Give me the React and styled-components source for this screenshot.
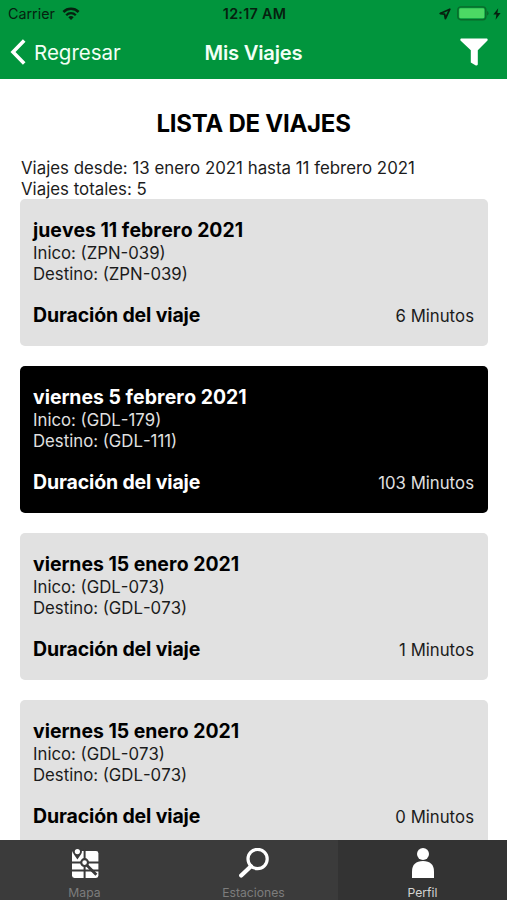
import styled, { createGlobalStyle } from "styled-components";

const trips = [
  {
    date: "jueves 11 febrero 2021",
    start: "(ZPN-039)",
    end: "(ZPN-039)",
    minutes: 6,
  },
  {
    date: "viernes 5 febrero 2021",
    start: "(GDL-179)",
    end: "(GDL-111)",
    minutes: 103,
    dark: true,
  },
  {
    date: "viernes 15 enero 2021",
    start: "(GDL-073)",
    end: "(GDL-073)",
    minutes: 1,
  },
  {
    date: "viernes 15 enero 2021",
    start: "(GDL-073)",
    end: "(GDL-073)",
    minutes: 0,
  },
];

function WifiIcon() {
  return (
    <svg width="18" height="14" viewBox="0 0 18 14" fill="none" stroke="#06210f">
      <path d="M1.4 5 A10.8 10.8 0 0 1 16.6 5" strokeWidth="2.5" />
      <path d="M4.2 8.2 A6.8 6.8 0 0 1 13.8 8.2" strokeWidth="2.3" />
      <path d="M9 13 L6.3 10.3 A3.9 3.9 0 0 1 11.7 10.3 Z" fill="#06210f" stroke="none" />
    </svg>
  );
}

function LocationIcon() {
  return (
    <svg width="12" height="12" viewBox="0 0 12 12">
      <path
        d="M10.8 1.2 L1.2 5.5 L5.6 6.1 L6.4 10.6 Z"
        fill="none"
        stroke="#06210f"
        strokeWidth="1.8"
        strokeLinejoin="round"
      />
    </svg>
  );
}

function BatteryIcon() {
  return (
    <svg width="32" height="15" viewBox="0 0 32 15">
      <rect x="0.8" y="0.9" width="28" height="12.8" rx="3" fill="none" stroke="#0a6a2b" strokeWidth="1.4" />
      <rect x="2.2" y="2.3" width="25.2" height="10" rx="1.4" fill="#4cd964" />
      <path d="M30 5 Q31.6 5.6 31.6 7.3 Q31.6 9 30 9.6 Z" fill="#0a6a2b" />
    </svg>
  );
}

function BoltIcon() {
  return (
    <svg width="8" height="12" viewBox="0 0 8 12">
      <path d="M5.2 0.3 L0.3 6.6 H3.4 L2.6 11.7 L7.6 5 H4.4 Z" fill="#06210f" />
    </svg>
  );
}

function BackIcon() {
  return (
    <svg width="16" height="26" viewBox="0 0 16 26">
      <path d="M14.2 1.4 L3 13 L14.2 24.6" fill="none" stroke="#fff" strokeWidth="3.6" />
    </svg>
  );
}

function FilterIcon() {
  return (
    <svg width="28" height="28" viewBox="0 0 28 28">
      <path
        d="M1 0.5 H27 Q28.4 1.6 27 3 L17.8 12.2 V26.6 Q17 28 15.4 27.2 L10.8 24.4 V12.2 L1 3 Q-0.4 1.6 1 0.5 Z"
        fill="#fff"
      />
    </svg>
  );
}

function MapIcon() {
  return (
    <svg width="28" height="30" viewBox="0 0 28 30">
      <rect x="1" y="3" width="26.4" height="27" rx="2.4" fill="#fff" />
      <g fill="none" stroke="#3b3b3b" strokeWidth="2">
        <path d="M13.6 1 V30" />
        <path d="M0 14.4 H28 M0 22.6 H28" />
        <path d="M13.6 15 L25.4 26.8" strokeWidth="2.8" />
      </g>
      <circle cx="13.6" cy="14.6" r="3.4" fill="#fff" stroke="#3b3b3b" strokeWidth="2.2" />
      <path d="M6.4 11.4 L2.6 6 A4.4 4.4 0 1 1 10.2 6 Z" fill="#3b3b3b" />
      <circle cx="6.4" cy="3.6" r="2.6" fill="#fff" />
    </svg>
  );
}

function SearchIcon() {
  return (
    <svg width="30" height="30" viewBox="0 0 30 30" fill="none" stroke="#fff">
      <circle cx="18.6" cy="11" r="9.6" strokeWidth="3.2" />
      <path d="M12 18.2 L2.2 27.6" strokeWidth="4.2" strokeLinecap="round" />
    </svg>
  );
}

function ProfileIcon() {
  return (
    <svg width="22" height="30" viewBox="0 0 22 30" fill="#fff">
      <circle cx="11" cy="6" r="6" />
      <path d="M0 30 V23.5 C0 16.5 4 13 11 13 C18 13 22 16.5 22 23.5 V30 Z" />
    </svg>
  );
}

function TripCard({ trip }) {
  return (
    <StyledTripCard $dark={trip.dark}>
      <TripTitle>{trip.date}</TripTitle>
      <TripText>Inico: {trip.start}</TripText>
      <TripText>Destino: {trip.end}</TripText>
      <TripDuration>
        <DurationLabel>Duración del viaje</DurationLabel>
        <TripText>{trip.minutes} Minutos</TripText>
      </TripDuration>
    </StyledTripCard>
  );
}

export default function App() {
  return (
    <Screen>
      <GlobalStyle />
      <Header>
        <StatusBar>
          <StatusLeft>
            <span>Carrier</span>
            <WifiIcon />
          </StatusLeft>
          <Clock>12:17 AM</Clock>
          <StatusRight>
            <LocationIcon />
            <BatteryIcon />
            <BoltIcon />
          </StatusRight>
        </StatusBar>
        <NavBar>
          <BackButton>
            <BackIcon />
            <span>Regresar</span>
          </BackButton>
          <NavTitle>Mis Viajes</NavTitle>
          <FilterButton>
            <FilterIcon />
          </FilterButton>
        </NavBar>
      </Header>

      <Content>
        <ListTitle>LISTA DE VIAJES</ListTitle>
        <Summary>Viajes desde: 13 enero 2021 hasta 11 febrero 2021</Summary>
        <Summary>Viajes totales: 5</Summary>
        <TripList>
          {trips.map((trip, i) => (
            <TripCard trip={trip} key={`${trip.date}-${i}`} />
          ))}
        </TripList>
      </Content>

      <TabBar>
        <Tab>
          <MapIcon />
          <TabLabel>Mapa</TabLabel>
        </Tab>
        <Tab>
          <SearchIcon />
          <TabLabel>Estaciones</TabLabel>
        </Tab>
        <Tab $active>
          <ProfileIcon />
          <TabLabel $active>Perfil</TabLabel>
        </Tab>
      </TabBar>
    </Screen>
  );
}

const GlobalStyle = createGlobalStyle`
  * {
    box-sizing: border-box;
  }

  body {
    margin: 0;
    background-color: #fff;
    font-family: Inter, "Liberation Sans", sans-serif;
  }

  svg {
    display: block;
    flex-shrink: 0;
  }
`;

const Screen = styled.div`
  display: flex;
  flex-direction: column;
  width: 507px;
  height: 900px;
  overflow: hidden;
`;

const Header = styled.header`
  flex: 0 0 79px;
  background-color: #01953d;
`;

const StatusBar = styled.div`
  display: grid;
  grid-template-columns: 1fr auto 1fr;
  align-items: center;
  height: 27px;
  padding: 0 6px 0 8px;
  color: #06210f;
  font-size: 14.3px;
`;

const StatusLeft = styled.div`
  display: flex;
  align-items: center;
  gap: 7px;
`;

const Clock = styled.div`
  font-size: 14.3px;
  font-weight: 600;
  letter-spacing: 0.3px;
`;

const StatusRight = styled.div`
  display: flex;
  align-items: center;
  justify-content: flex-end;
  gap: 4px;

  svg:first-child {
    margin-right: 2px;
  }
`;

const NavBar = styled.div`
  display: grid;
  grid-template-columns: 1fr auto 1fr;
  align-items: center;
  height: 50px;
  padding: 0 19px;
  color: #f2fff6;
`;

const BackButton = styled.div`
  display: flex;
  align-items: center;
  gap: 8px;
  margin-left: -9px;
  font-size: 20.5px;
`;

const NavTitle = styled.div`
  font-size: 20.2px;
  font-weight: 600;
  letter-spacing: -0.2px;
`;

const FilterButton = styled.div`
  display: flex;
  justify-content: flex-end;
`;

const Content = styled.main`
  flex: 1;
  min-height: 0;
  overflow: hidden;
  padding: 0 19px 0 20px;
`;

const ListTitle = styled.h1`
  margin: 29px 1px 19px 0;
  color: #000;
  font-size: 24px;
  font-weight: 700;
  letter-spacing: -0.25px;
  line-height: 31px;
  text-align: center;
`;

const Summary = styled.p`
  margin: 0 0 0 1px;
  color: #1c1c1c;
  font-size: 16.85px;
  line-height: 21px;
`;

const TripList = styled.div`
  display: grid;
  gap: 20px;
  margin-top: -1px;
`;

const StyledTripCard = styled.article`
  height: 147px;
  padding: 20px 14px 0 13px;
  border-radius: 5px;
  color: ${({ $dark }) => ($dark ? "#fff" : "#000")};
  background-color: ${({ $dark }) => ($dark ? "#000" : "#e1e1e1")};
`;

const TripTitle = styled.h2`
  margin: 0 0 1px;
  font-size: 19.4px;
  font-weight: 700;
  font-kerning: none;
  line-height: 23px;
`;

const TripText = styled.p`
  margin: 0;
  font-size: 16.75px;
  font-kerning: none;
  line-height: 21px;
  opacity: 0.88;
`;

const TripDuration = styled.div`
  display: flex;
  align-items: baseline;
  justify-content: space-between;
  margin-top: 19px;
`;

const DurationLabel = styled.h3`
  margin: 0;
  font-size: 19.5px;
  font-weight: 700;
  letter-spacing: -0.14px;
  line-height: 23px;
`;

const TabBar = styled.nav`
  display: grid;
  grid-template-columns: repeat(3, 1fr);
  flex: 0 0 60px;
`;

const Tab = styled.div`
  display: flex;
  flex-direction: column;
  align-items: center;
  padding-top: 8px;
  background-color: ${({ $active }) => ($active ? "#333" : "#3b3b3b")};
`;

const TabLabel = styled.span`
  margin-top: 7px;
  color: ${({ $active }) => ($active ? "#d4d4d4" : "#7d7d7d")};
  font-size: 12.2px;
  line-height: 15px;
`;
